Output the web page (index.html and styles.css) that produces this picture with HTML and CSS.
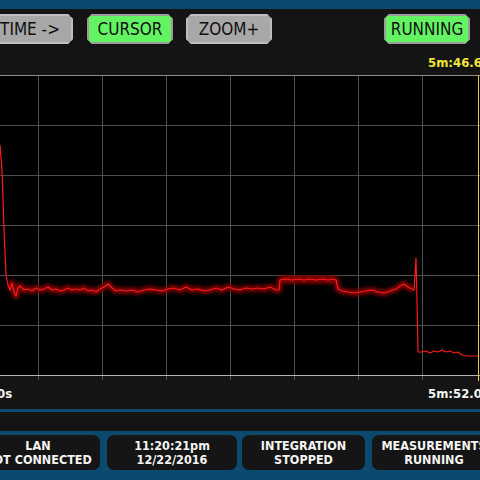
FILE: index.html
```html
<!DOCTYPE html>
<html>
<head>
<meta charset="utf-8">
<link rel="stylesheet" href="styles.css">
</head>
<body>
<div class="screen">
  <div class="topbar"></div>
  <div class="toolbar">
    <div class="btn gray first">TIME -&gt;</div>
    <div class="btn green">CURSOR</div>
    <div class="btn gray">ZOOM+</div>
    <div class="spacer"></div>
    <div class="btn green">RUNNING</div>
  </div>
  <div class="readout"><span class="cursor-time">5m:46.6s</span></div>
  <svg class="chart" width="480" height="306" viewBox="0 0 480 306">
    <defs>
      <filter id="blur" x="-5%" y="-20%" width="110%" height="140%">
        <feGaussianBlur stdDeviation="1.6"/>
      </filter>
    </defs>
    <rect class="plot-bg" x="0" y="0" width="480" height="301"/>
    <g class="grid">
      <line x1="0" y1="50.5" x2="480" y2="50.5"/>
      <line x1="0" y1="100.5" x2="480" y2="100.5"/>
      <line x1="0" y1="150.5" x2="480" y2="150.5"/>
      <line x1="0" y1="200.5" x2="480" y2="200.5"/>
      <line x1="0" y1="250.5" x2="480" y2="250.5"/>
      <line x1="38.5" y1="0" x2="38.5" y2="305"/>
      <line x1="102.5" y1="0" x2="102.5" y2="305"/>
      <line x1="166.5" y1="0" x2="166.5" y2="305"/>
      <line x1="230.5" y1="0" x2="230.5" y2="305"/>
      <line x1="294.5" y1="0" x2="294.5" y2="305"/>
      <line x1="358.5" y1="0" x2="358.5" y2="305"/>
      <line x1="422.5" y1="0" x2="422.5" y2="305"/>
    </g>
    <line class="frame-top" x1="0" y1="0.5" x2="480" y2="0.5"/>
    <line class="frame-bottom" x1="0" y1="300.5" x2="480" y2="300.5"/>
    <g transform="translate(0,-75)">
      <g filter="url(#blur)">
        <polyline class="glow-wide" points="281,279 290,279 300,279 310,279 320,279 330,279 334,279"/>
        <polyline class="glow" points="10,290 12,283 14,292 16,296 18,288 20,286 24,290 28,289 32,291 36,288 40,290 44,289 48,287 52,290 56,289 60,291 64,290 68,288 72,290 76,289 80,290 84,288 88,291 92,290 96,292 100,289 104,287 108,284 112,288 116,291 120,290 126,291 132,290 138,292 144,290 150,289 156,290 162,291 168,289 174,288 180,290 186,287 192,290 198,289 204,291 210,290 216,288 222,290 228,287 234,289 240,290 246,288 252,289 258,288 264,289 270,287 276,290 279,290 280,280 286,279 292,280 298,279 304,280 310,279 316,280 322,279 328,280 334,279 336,280 338,289 342,291 348,292 354,293 360,292 366,291 372,290 378,292 384,293 390,291 396,289 400,286 404,284 408,287 412,289 414,290"/>
      </g>
      <polyline class="trace" points="0,145 2,170 4,230 6,275 8,285 10,290 12,283 14,292 16,296 18,288 20,286 24,290 28,289 32,291 36,288 40,290 44,289 48,287 52,290 56,289 60,291 64,290 68,288 72,290 76,289 80,290 84,288 88,291 92,290 96,292 100,289 104,287 108,284 112,288 116,291 120,290 126,291 132,290 138,292 144,290 150,289 156,290 162,291 168,289 174,288 180,290 186,287 192,290 198,289 204,291 210,290 216,288 222,290 228,287 234,289 240,290 246,288 252,289 258,288 264,289 270,287 276,290 279,290 280,280 286,279 292,280 298,279 304,280 310,279 316,280 322,279 328,280 334,279 336,280 338,289 342,291 348,292 354,293 360,292 366,291 372,290 378,292 384,293 390,291 396,289 400,286 404,284 408,287 412,289 414,290 415,275 416,258 417,300 418,352 422,352 426,351 430,353 434,351 438,352 442,350 446,352 450,351 454,353 458,352 462,355 466,356 470,356 474,356 478,356"/>
    </g>
    <line class="cursor-line" x1="478.5" y1="0" x2="478.5" y2="306"/>
  </svg>
  <div class="axis">
    <span class="axis-start">0s</span>
    <span class="axis-end">5m:52.0s</span>
  </div>
  <div class="divider"></div>
  <div class="band"></div>
  <div class="status">
    <div class="box lan">LAN<br>NOT CONNECTED</div>
    <div class="box date">11:20:21pm<br>12/22/2016</div>
    <div class="box integ">INTEGRATION<br>STOPPED</div>
    <div class="box meas">MEASUREMENTS<br>RUNNING</div>
  </div>
</div>
</body>
</html>
```
FILE: styles.css
```css
html, body {
  margin: 0;
  padding: 0;
  background: #141414;
}
.screen {
  width: 480px;
  height: 480px;
  overflow: hidden;
  display: flex;
  flex-direction: column;
  background: #141414;
  font-family: "DejaVu Sans Condensed", "DejaVu Sans", sans-serif;
  font-stretch: condensed;
}
.topbar {
  height: 9px;
  background: #0b4a6e;
  flex: none;
}
.toolbar {
  height: 39px;
  flex: none;
  display: flex;
  align-items: flex-start;
  padding-top: 5px;
  box-sizing: border-box;
  margin-left: -13px;
  margin-right: 10px;
  gap: 13px;
}
.spacer { flex: 1; }
.btn {
  width: 86px;
  height: 30px;
  flex: none;
  display: flex;
  align-items: center;
  justify-content: center;
  font-size: 17px;
  color: #101010;
  clip-path: polygon(5px 0, calc(100% - 5px) 0, 100% 5px, 100% calc(100% - 5px), calc(100% - 5px) 100%, 5px 100%, 0 calc(100% - 5px), 0 5px);
  box-shadow: inset 0 0 0 2px #9c9c9c;
}
.btn.gray { background: #a8a8a8; box-shadow: inset 0 0 0 2px #bdbdbd; }
.btn.green { background: #63f363; }
.btn.first { margin-right: 1px; }
.readout {
  height: 27px;
  flex: none;
  display: flex;
  justify-content: flex-start;
  align-items: flex-end;
  padding-left: 428px;
  box-sizing: border-box;
  white-space: nowrap;
}
.cursor-time {
  color: #f2e23a;
  font-size: 13px;
  font-weight: bold;
  line-height: 1;
  margin-bottom: 6px;
}
.chart {
  display: block;
  flex: none;
}
.plot-bg { fill: #000; }
.grid line { stroke: #4e4e4e; stroke-width: 1; }
.frame-top { stroke: #8c8c80; stroke-width: 1; }
.frame-bottom { stroke: #b4b4b4; stroke-width: 1; }
.cursor-line { stroke: #e8c83a; stroke-width: 1; }
.glow-wide { fill: none; stroke: #700000; stroke-width: 10; opacity: 0.8; }
.glow { fill: none; stroke: #8a0000; stroke-width: 7; stroke-linejoin: round; opacity: 0.8; }
.trace { fill: none; stroke: #ff1a1a; stroke-width: 1.2; stroke-linejoin: round; }
.axis {
  height: 28px;
  flex: none;
  display: flex;
  justify-content: space-between;
  align-items: flex-start;
  color: #f4f4f4;
  font-size: 13px;
  font-weight: bold;
  white-space: nowrap;
}
.axis-start { margin-left: -3px; margin-top: 5px; }
.axis-end { margin-top: 5px; width: 52px; overflow: visible; }
.divider {
  height: 3px;
  flex: none;
  background: #0b4a6e;
}
.band {
  height: 19px;
  flex: none;
  background: #141414;
}
.status {
  flex: 1;
  background: #0b4a6e;
  display: flex;
  align-items: flex-start;
  padding-top: 4px;
  margin-left: -24px;
  white-space: nowrap;
}
.box {
  height: 35px;
  flex: none;
  box-sizing: border-box;
  background: #151515;
  border-radius: 7px;
  color: #f4f4f4;
  font-size: 12.5px;
  font-weight: bold;
  line-height: 14px;
  text-align: center;
  padding-top: 4px;
}
.lan { width: 124px; }
.date { width: 130px; margin-left: 7px; }
.integ { width: 123px; margin-left: 5px; }
.meas { width: 124px; margin-left: 7px; }
```
